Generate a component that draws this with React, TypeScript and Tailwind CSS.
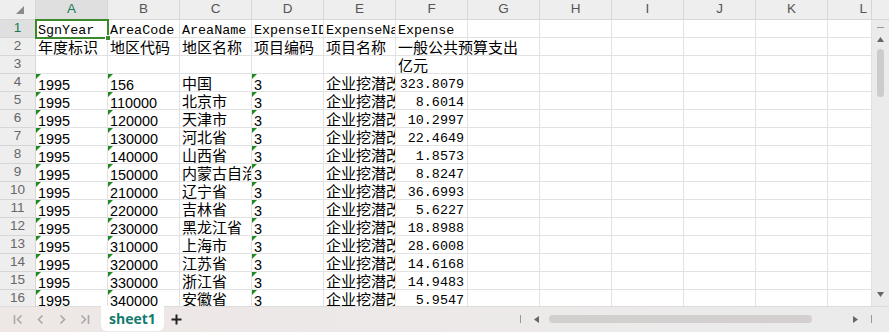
import React from "react";

type Kind = "mono" | "cjk" | "sans";
type CellDef = { t?: string; k?: Kind; r?: boolean; tri?: boolean; ov?: boolean };

const COLS = ["A", "B", "C", "D", "E", "F", "G", "H", "I", "J", "K", "L"];

const data: [string, string, string][] = [
  ["156", "中国", "323.8079"],
  ["110000", "北京市", "8.6014"],
  ["120000", "天津市", "10.2997"],
  ["130000", "河北省", "22.4649"],
  ["140000", "山西省", "1.8573"],
  ["150000", "内蒙古自治区", "8.8247"],
  ["210000", "辽宁省", "36.6993"],
  ["220000", "吉林省", "5.6227"],
  ["230000", "黑龙江省", "18.8988"],
  ["310000", "上海市", "28.6008"],
  ["320000", "江苏省", "14.6168"],
  ["330000", "浙江省", "14.9483"],
  ["340000", "安徽省", "5.9547"],
];

const rows: CellDef[][] = [
  [
    { t: "SgnYear", k: "mono" },
    { t: "AreaCode", k: "mono" },
    { t: "AreaName", k: "mono" },
    { t: "ExpenseID", k: "mono" },
    { t: "ExpenseName", k: "mono" },
    { t: "Expense", k: "mono" },
  ],
  [
    { t: "年度标识", k: "cjk" },
    { t: "地区代码", k: "cjk" },
    { t: "地区名称", k: "cjk" },
    { t: "项目编码", k: "cjk" },
    { t: "项目名称", k: "cjk" },
    { t: "一般公共预算支出", k: "cjk", ov: true },
  ],
  [{}, {}, {}, {}, {}, { t: "亿元", k: "cjk" }],
  ...data.map(([code, name, val]) => [
    { t: "1995", k: "sans" as Kind, tri: true },
    { t: code, k: "sans" as Kind, tri: true },
    { t: name, k: "cjk" as Kind },
    { t: "3", k: "sans" as Kind, tri: true },
    { t: "企业挖潜改造资金", k: "cjk" as Kind },
    { t: val, k: "mono" as Kind, r: true },
  ]),
];

const fontCls: Record<Kind, string> = {
  mono: "font-['Liberation_Mono',monospace] text-[13.4px] pt-[2px]",
  cjk: "font-['Noto_Sans_CJK_SC',sans-serif] text-[15px]",
  sans: "font-['Liberation_Sans',sans-serif] text-[14.4px] pt-[2px]",
};

function Cell({ c, col, row }: { c?: CellDef; col: number; row: number }) {
  const isSel = col === 0 && row === 0;
  return (
    <div
      className={`relative h-[18px] border-r border-b border-[#e2e2e2] ${
        c?.ov || isSel ? "overflow-visible z-10" : "overflow-hidden"
      }`}
    >
      {c?.t && (
        <div
          className={`absolute inset-0 whitespace-nowrap leading-[18px] text-black ${
            c.r ? "text-right pr-[3px]" : "pl-[2px]"
          } ${c.k ? fontCls[c.k] : ""}`}
        >
          {c.t}
        </div>
      )}
      {c?.tri && (
        <div className="absolute left-0 top-0 w-0 h-0 border-t-[5px] border-r-[5px] border-t-[#1f8a1f] border-r-transparent" />
      )}
      {isSel && (
        <>
          <div className="absolute left-[-1px] top-[-1px] right-[-2px] bottom-[-2px] border-[2px] border-[#3a8a2c]" />
          <div className="absolute right-[-4px] bottom-[-4px] w-[6px] h-[6px] bg-[#3a8a2c] border border-white" />
        </>
      )}
    </div>
  );
}

export default function App() {
  return (
    <div className="w-[889px] h-[332px] overflow-hidden bg-white flex flex-col select-none">
      <div className="flex h-[306px] overflow-hidden">
        <div className="w-[872px] overflow-hidden">
          <div className="grid grid-cols-[36px_repeat(11,72px)_44px]">
            <div className="h-[20px] bg-[#eeeeee] border-r border-b border-[#d6d6d6] relative">
              <svg className="absolute left-[16px] top-[6px]" width="8" height="8" viewBox="0 0 8 8">
                <path d="M8 0 L8 8 L0 8 Z" fill="#8a8a8a" />
              </svg>
            </div>
            {COLS.map((l, i) => (
              <div
                key={l}
                className={`h-[20px] border-r border-b border-[#d6d6d6] flex items-center justify-center font-['Liberation_Sans',sans-serif] text-[13.5px] ${
                  i === 0 ? "bg-[#dfdfdf] text-[#1b7a5a]" : "bg-[#eeeeee] text-[#555]"
                } ${i === 11 ? "justify-end pr-[4px]" : ""}`}
              >
                {l}
              </div>
            ))}
            {rows.map((r, ri) => (
              <React.Fragment key={ri}>
                <div
                  className={`h-[18px] border-r border-b border-[#d6d6d6] flex items-center justify-center font-['Liberation_Sans',sans-serif] text-[13.5px] ${
                    ri === 0 ? "bg-[#dfdfdf] text-[#1b7a5a]" : "bg-[#eeeeee] text-[#666]"
                  }`}
                >
                  {ri + 1}
                </div>
                {COLS.map((_, ci) => (
                  <Cell key={ci} c={r[ci]} col={ci} row={ri} />
                ))}
              </React.Fragment>
            ))}
          </div>
        </div>
        <div className="w-[17px] flex flex-col">
          <div className="h-[20px] bg-[#eeeeee] border-b border-[#d6d6d6]" />
          <div className="flex-1 bg-[#ebebeb] flex flex-col items-center relative">
            <div className="mt-[7px] w-[7px] h-[1px] bg-[#999]" />
            <svg className="mt-[9px]" width="7" height="5" viewBox="0 0 7 5">
              <path d="M3.5 0 L7 5 L0 5 Z" fill="#666" />
            </svg>
            <div className="mt-[7px] w-[7px] h-[48px] rounded-full bg-[#cdcbcb]" />
            <svg className="absolute bottom-[9px]" width="7" height="5" viewBox="0 0 7 5">
              <path d="M0 0 L7 0 L3.5 5 Z" fill="#666" />
            </svg>
          </div>
        </div>
      </div>
      <div className="h-[26px] flex items-start bg-gradient-to-r from-[#eee7e6] to-[#ebebeb] border-t border-[#dcdcdc]">
        <div className="flex items-center h-[24px] pl-[13px] gap-[11px]">
          <svg width="11" height="11" viewBox="0 0 11 11" fill="none" stroke="#a8a8a8" strokeWidth="1.6">
            <path d="M1.5 1 V10" />
            <path d="M8.5 1.5 L4.5 5.5 L8.5 9.5" />
          </svg>
          <svg width="11" height="11" viewBox="0 0 11 11" fill="none" stroke="#a8a8a8" strokeWidth="1.6">
            <path d="M7.5 1.5 L3.5 5.5 L7.5 9.5" />
          </svg>
          <svg width="11" height="11" viewBox="0 0 11 11" fill="none" stroke="#a8a8a8" strokeWidth="1.6">
            <path d="M3.5 1.5 L7.5 5.5 L3.5 9.5" />
          </svg>
          <svg width="11" height="11" viewBox="0 0 11 11" fill="none" stroke="#a8a8a8" strokeWidth="1.6">
            <path d="M2.5 1.5 L6.5 5.5 L2.5 9.5" />
            <path d="M9.5 1 V10" />
          </svg>
        </div>
        <div className="ml-[11px] mt-[-1px] w-[63px] h-[25px] bg-white rounded-b-[6px] flex items-center justify-center font-['Open_Sans',sans-serif] font-bold text-[14px] text-[#137a6c]">
          sheet1
        </div>
        <div className="ml-[7px] h-[24px] flex items-center">
          <svg width="11" height="11" viewBox="0 0 11 11" stroke="#222" strokeWidth="2">
            <path d="M5.5 0.5 V10.5 M0.5 5.5 H10.5" />
          </svg>
        </div>
        <div className="ml-auto w-[374px] h-[24px] flex items-center">
          <div className="ml-[5px] w-[1px] h-[8px] bg-[#999]" />
          <svg className="ml-[13px]" width="5" height="7" viewBox="0 0 5 7">
            <path d="M5 0 L5 7 L0 3.5 Z" fill="#666" />
          </svg>
          <div className="ml-[10px] w-[263px] h-[8px] rounded-full bg-[#d3cfce]" />
          <svg className="ml-[41px]" width="5" height="7" viewBox="0 0 5 7">
            <path d="M0 0 L5 3.5 L0 7 Z" fill="#666" />
          </svg>
          <div className="ml-[13px] w-[1px] h-[8px] bg-[#999]" />
        </div>
      </div>
    </div>
  );
}
